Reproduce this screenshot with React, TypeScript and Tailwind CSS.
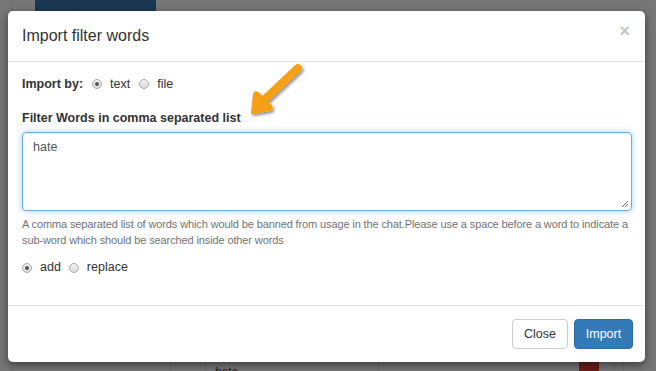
import React from 'react'

function Radio({ checked }: { checked?: boolean }) {
  return (
    <span className="inline-flex h-[10px] w-[10px] items-center justify-center rounded-full border border-[#a9a9a9] bg-gradient-to-b from-[#f2f2f2] to-[#dcdcdc]">
      {checked && <span className="h-[4px] w-[4px] rounded-full bg-[#555]" />}
    </span>
  )
}

function Arrow() {
  return (
    <svg width="70" height="64" viewBox="0 0 70 64" className="absolute left-[242px] top-[58px]">
      <defs>
        <filter id="sh" x="-30%" y="-30%" width="160%" height="160%">
          <feDropShadow dx="1.5" dy="2" stdDeviation="1.5" floodColor="#000" floodOpacity="0.45" />
        </filter>
      </defs>
      <g filter="url(#sh)">
        <line x1="56" y1="10" x2="22" y2="42" stroke="#f5a012" strokeWidth="8" strokeLinecap="round" />
        <path d="M10 55 L12 36 Q13 33 16 35 L29 48 Q31 51 28 52 Z" fill="#f5a012" stroke="#f5a012" strokeWidth="2" strokeLinejoin="round" />
      </g>
    </svg>
  )
}

export default function App() {
  return (
    <div className="relative h-[371px] w-[656px] overflow-hidden bg-[#767676] font-['Liberation_Sans',Arial,sans-serif] text-[#333]">
      {/* backdrop page content */}
      <div className="absolute left-[35px] top-0 h-[11px] w-[121px] bg-[#1c3753]" />
      <div className="absolute left-[12px] top-0 h-full w-px bg-[#6c6c6c]" />
      <div className="absolute bottom-0 left-[12px] right-[12px] top-[358px] flex text-[12px] text-[#222]">
        <div className="w-[159px] border-r border-[#6c6c6c]" />
        <div className="w-[35px] border-r border-[#6c6c6c]" />
        <div className="w-[173px] border-r border-[#6c6c6c] pl-[9px] pt-[5px]">hate</div>
        <div className="flex w-[236px] justify-end border-r border-[#6c6c6c] pt-[2px] pr-[15px]">
          <div className="h-[12px] w-[20px] rounded-[2px] bg-[#6e1f1c]" />
        </div>
        <div className="w-[9px] border-r border-[#6c6c6c]" />
      </div>

      {/* modal */}
      <div className="absolute left-[8px] top-[11px] w-[637px] rounded-[5px] bg-white shadow-[0_3px_9px_rgba(0,0,0,0.5)]">
        <div className="flex h-[51px] items-center justify-between border-b border-[#e5e5e5] pl-[14px] pr-[15px]">
          <h4 className="text-[16px] leading-none text-[#333]">Import filter words</h4>
          <span className="-mt-[10px] text-[18px] font-bold leading-none text-[#c4c4c4]">×</span>
        </div>

        <div className="relative px-[14px] pt-[13px] text-[12.5px]">
          <div className="flex h-[18px] items-center">
            <span className="font-bold">Import by:</span>
            <span className="ml-[9px] flex items-center gap-[8px]">
              <Radio checked />
              <span>text</span>
            </span>
            <span className="ml-[9px] flex items-center gap-[8px]">
              <Radio />
              <span>file</span>
            </span>
          </div>

          <div className="mt-[16px] h-[18px] font-bold leading-[18px]">Filter Words in comma separated list</div>

          <div className="relative mt-[5px] h-[79px] w-[610px] rounded-[4px] border border-[#66afe9] px-[10px] pt-[5px] text-[#555] shadow-[inset_0_1px_1px_rgba(0,0,0,0.075),0_0_6px_rgba(102,175,233,0.6)]">
            hate
            <svg width="8" height="8" viewBox="0 0 8 8" className="absolute bottom-[2px] right-[2px]">
              <path d="M7 1 L1 7 M7 4 L4 7" stroke="#777" strokeWidth="1" />
            </svg>
          </div>

          <p className="mt-[5px] text-[11px] leading-[16px] tracking-[-0.12px] text-[#737373]">
            A comma separated list of words which would be banned from usage in the chat.Please use a space before a word to indicate a <span className="whitespace-nowrap">sub-word</span> which should be searched inside other words
          </p>

          <div className="mt-[11px] flex h-[18px] items-center pb-[1px]">
            <span className="flex items-center gap-[8px]">
              <Radio checked />
              <span>add</span>
            </span>
            <span className="ml-[8px] flex items-center gap-[8px]">
              <Radio />
              <span>replace</span>
            </span>
          </div>
          <div className="h-[28px]" />
        </div>

        <div className="flex justify-end gap-[6px] border-t border-[#e5e5e5] px-[12px] pb-[13px] pt-[13px] text-[12.5px]">
          <button className="h-[30px] w-[56px] rounded-[4px] border border-[#ccc] bg-white text-[#333]">Close</button>
          <button className="h-[30px] w-[59px] rounded-[4px] border border-[#2e6da4] bg-[#337ab7] text-white">Import</button>
        </div>
      </div>

      <Arrow />
    </div>
  )
}
